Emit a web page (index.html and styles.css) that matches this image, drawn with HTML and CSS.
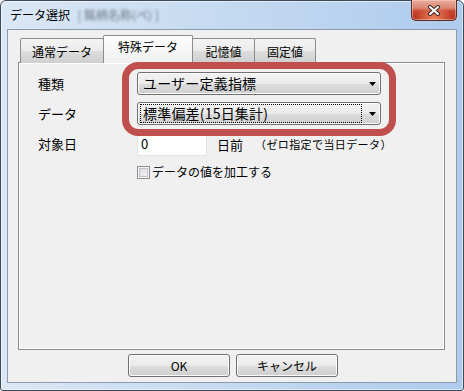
FILE: index.html
```html
<!DOCTYPE html>
<html lang="ja">
    <head>
        <meta charset="UTF-8" />
        <title>データ選択</title>
        <link rel="stylesheet" href="styles.css">
    </head>
    <body>
        <div class="window">
            <div class="titlebar">
                <div class="title">データ選択<span class="blurred">| 銘柄名称(ペ) ]</span></div>
                <div class="close">
                    <svg width="14" height="11" viewBox="0 0 14 11">
                        <path d="M3 2 L11 9 M11 2 L3 9" stroke="#3a2a28" stroke-width="4" stroke-linecap="round" fill="none" />
                        <path d="M3 2 L11 9 M11 2 L3 9" stroke="#ffffff" stroke-width="2" stroke-linecap="round" fill="none" />
                    </svg>
                </div>
            </div>
            <div class="client">
                <div class="tabs">
                    <div class="tab">通常データ</div>
                    <div class="tab active">特殊データ</div>
                    <div class="tab">記憶値</div>
                    <div class="tab">固定値</div>
                </div>
                <div class="panel">
                    <div class="form">
                        <div class="label">種類</div>
                        <div class="combo">
                            <span class="value">ユーザー定義指標</span>
                            <svg class="arrow" width="7" height="4" viewBox="0 0 7 4"><polygon points="0,0 7,0 3.5,4" fill="#000" /></svg>
                        </div>
                        <div class="label">データ</div>
                        <div class="combo">
                            <span class="value focus">標準偏差(15日集計)</span>
                            <svg class="arrow" width="7" height="4" viewBox="0 0 7 4"><polygon points="0,0 7,0 3.5,4" fill="#000" /></svg>
                        </div>
                        <div class="label">対象日</div>
                        <div class="date-row">
                            <div class="textbox">0</div>
                            <span class="unit">日前</span>
                            <span class="note">（ゼロ指定で当日データ）</span>
                        </div>
                        <div></div>
                        <div class="check"><span class="box"></span>データの値を加工する</div>
                    </div>
                </div>
                <div class="buttons">
                    <div class="button">OK</div>
                    <div class="button">キャンセル</div>
                </div>
                <div class="highlight"></div>
            </div>
        </div>
    </body>
</html>
```

FILE: styles.css
```css
body {
    margin: 0;
    padding: 0;
    background-color: #ffffff;
    font-family: "Noto Sans CJK JP", "Noto Sans", sans-serif;
    color: #000000;
}
.window {
    width: 464px;
    height: 391px;
    box-sizing: border-box;
    display: flex;
    flex-direction: column;
    padding: 0 6px 7px;
    border: 1px solid #3e4957;
    border-radius: 6px 6px 3px 3px;
    background: linear-gradient(to right, #dbe7f5, #c6dbf1 45%, #aecbed);
    box-shadow: inset 0 0 0 1px rgba(255, 255, 255, 0.55);
}
.titlebar {
    height: 28px;
    display: flex;
    justify-content: space-between;
    align-items: flex-start;
    flex-shrink: 0;
}
.title {
    margin: 5px 0 0 3px;
    font-size: 12px;
    line-height: 17px;
    white-space: nowrap;
}
.blurred {
    margin-left: 8px;
    color: #3c4450;
    opacity: 0.7;
    filter: blur(1.4px);
}
.close {
    width: 46px;
    height: 21px;
    margin-top: -1px;
    box-sizing: border-box;
    display: flex;
    align-items: center;
    justify-content: center;
    border: 1px solid #5c2b22;
    border-top: none;
    border-radius: 0 0 5px 5px;
    background:
        radial-gradient(ellipse at 50% 100%, rgba(255, 170, 120, 0.7), rgba(255, 170, 120, 0) 60%),
        linear-gradient(#e9ad9e 0%, #da8672 40%, #c6442e 55%, #b8321d 100%);
    box-shadow: inset 0 0 0 1px rgba(255, 220, 210, 0.45);
}
.client {
    position: relative;
    flex: 1;
    display: flex;
    flex-direction: column;
    border: 1px solid #8b9aac;
    background-color: #f0f0f0;
}
.tabs {
    position: relative;
    z-index: 2;
    display: flex;
    align-items: flex-end;
    height: 26px;
    margin: 7px 0 -1px 12px;
}
.tab {
    height: 25px;
    box-sizing: border-box;
    margin-left: -1px;
    padding-top: 5px;
    border: 1px solid #898c95;
    border-bottom: none;
    border-radius: 2px 2px 0 0;
    background: linear-gradient(#f3f3f3 0%, #ebebeb 50%, #dddddd 51%, #cfcfcf 100%);
    font-size: 12px;
    line-height: 16px;
    text-align: center;
}
.tab:nth-child(1) {
    width: 84px;
    margin-left: 0;
}
.tab:nth-child(2) {
    width: 90px;
}
.tab:nth-child(3) {
    width: 63px;
}
.tab:nth-child(4) {
    width: 62px;
}
.tab.active {
    position: relative;
    height: 28px;
    padding-top: 3px;
    background: linear-gradient(#fcfcfc, #f0f0f0);
}
.panel {
    height: 288px;
    box-sizing: border-box;
    margin: 0 11px 0 10px;
    padding: 9px 0 0 19px;
    border: 1px solid #898c95;
    box-shadow: inset 0 0 0 1px #ffffff;
}
.form {
    display: grid;
    grid-template-columns: 99px 244px;
    grid-template-rows: 23px 23px 24px 17px;
    row-gap: 7px;
}
.label {
    align-self: center;
    font-size: 13px;
    line-height: 16px;
}
.combo {
    display: flex;
    align-items: center;
    height: 23px;
    box-sizing: border-box;
    padding: 0 4px 0 2px;
    border: 1px solid #707070;
    border-radius: 3px;
    background: linear-gradient(#f2f2f2 0%, #ebebeb 50%, #dddddd 51%, #cfcfcf 100%);
    box-shadow: inset 0 0 0 1px #fcfcfc;
}
.value {
    flex: 1;
    height: 19px;
    box-sizing: border-box;
    margin-right: 7px;
    padding-left: 2px;
    border: 1px dotted transparent;
    font-size: 14px;
    line-height: 17px;
    letter-spacing: 0.2px;
    white-space: nowrap;
}
.value.focus {
    border-color: #000000;
}
.arrow {
    flex-shrink: 0;
}
.date-row {
    display: flex;
    align-items: center;
    white-space: nowrap;
}
.date-row > * {
    flex-shrink: 0;
}
.textbox {
    width: 70px;
    height: 24px;
    box-sizing: border-box;
    padding: 2px 0 0 3px;
    border: 1px solid #e0e3e8;
    background-color: #ffffff;
    font-size: 13px;
    line-height: 18px;
}
.unit {
    margin-left: 10px;
    font-size: 13px;
}
.note {
    margin-left: 12px;
    font-size: 11px;
    letter-spacing: 0.4px;
}
.check {
    display: flex;
    align-items: center;
    margin-top: 1px;
    font-size: 12px;
    line-height: 16px;
    white-space: nowrap;
}
.box {
    width: 13px;
    height: 13px;
    box-sizing: border-box;
    margin-right: 2px;
    border: 1px solid #8f8f8f;
    background: linear-gradient(135deg, #d2d5da, #f8f8f8);
    box-shadow: inset 0 0 0 1px #f4f4f4, inset 0 0 0 2px #bfc3c9;
}
.buttons {
    display: flex;
    gap: 6px;
    padding: 4px 0 0 120px;
}
.button {
    width: 102px;
    height: 23px;
    box-sizing: border-box;
    border: 1px solid #707070;
    border-radius: 3px;
    background: linear-gradient(#f2f2f2 0%, #ebebeb 50%, #dddddd 51%, #cfcfcf 100%);
    box-shadow: inset 0 0 0 1px #fcfcfc;
    font-size: 12px;
    line-height: 21px;
    text-align: center;
}
.highlight {
    position: absolute;
    z-index: 3;
    left: 114px;
    top: 32px;
    width: 274px;
    height: 74px;
    box-sizing: border-box;
    border: 7px solid #c0504d;
    border-radius: 16px;
}
```
